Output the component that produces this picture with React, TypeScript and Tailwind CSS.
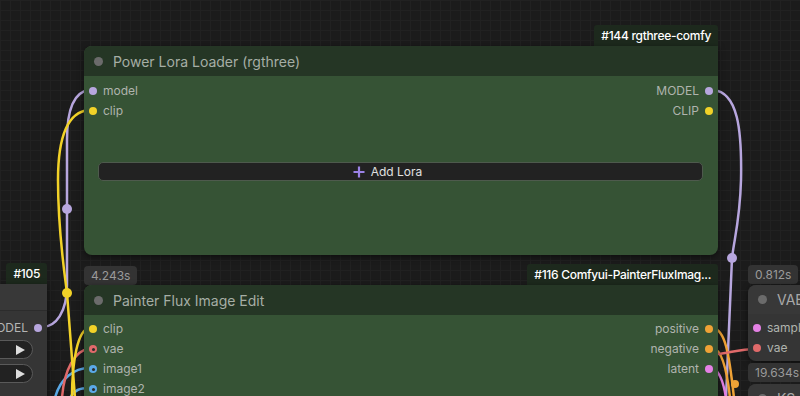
import React from "react";

type Slot = {
  label: string;
  dot: string;
  hollow?: boolean;
};

function Dot({ dot, hollow }: { dot: string; hollow?: boolean }) {
  return (
    <span className={`w-[8px] h-[8px] rounded-full flex items-center justify-center shrink-0 ${dot}`}>
      {hollow && <span className="w-[3px] h-[3px] rounded-full bg-[#2c2c2c]" />}
    </span>
  );
}

function SlotRows({ inputs, outputs }: { inputs: Slot[]; outputs: Slot[] }) {
  const rows = Math.max(inputs.length, outputs.length);
  return (
    <>
      {Array.from({ length: rows }, (_, i) => (
        <div key={i} className="h-[20px] px-[5px] flex items-center justify-between text-[12px] text-[#b0b4ae]">
          <div className="flex items-center gap-[6px]">
            {inputs[i] && (
              <>
                <Dot dot={inputs[i].dot} hollow={inputs[i].hollow} />
                <span>{inputs[i].label}</span>
              </>
            )}
          </div>
          <div className="flex items-center gap-[6px]">
            {outputs[i] && (
              <>
                <span>{outputs[i].label}</span>
                <Dot dot={outputs[i].dot} hollow={outputs[i].hollow} />
              </>
            )}
          </div>
        </div>
      ))}
    </>
  );
}

function Badge({ children }: { children: React.ReactNode }) {
  return (
    <div className="h-[21px] px-[7px] flex items-center bg-[#1d291d] text-white text-[12px] font-medium tracking-[-0.3px] rounded-t-[3px]">
      {children}
    </div>
  );
}

function Timing({ children }: { children: React.ReactNode }) {
  return (
    <div className="h-[19px] px-[7px] flex items-center bg-[#333333] text-[#9a9a9a] text-[12px] rounded-[4px]">
      {children}
    </div>
  );
}

function GreenTitle({ title }: { title: string }) {
  return (
    <div className="h-[30px] bg-[#253625] flex items-center pl-[10px] gap-[10px]">
      <span className="w-[9px] h-[9px] rounded-full bg-[#6b6b6b]" />
      <span className="text-[14px] text-[#a6aea5]">{title}</span>
    </div>
  );
}

function Wires() {
  return (
    <svg className="absolute inset-0" width={800} height={396} viewBox="0 0 800 396" fill="none" strokeLinecap="round">
      {/* bottom-left feeds into node 116 */}
      <path d="M55,398 C60,378 75,368 89,368" stroke="#5aa9e6" strokeWidth={2.5} />
      <path d="M70,398 C74,390 80,388 89,388" stroke="#5aa9e6" strokeWidth={2.5} />
      <path d="M62,398 C64,370 75,350 89,349" stroke="#e06a6a" strokeWidth={2.5} />
      <path d="M72,398 C72,360 78,330 89,328" stroke="#f2d228" strokeWidth={2.5} />
      {/* model from #105 */}
      <path d="M89,90 C74,92 67,110 67,140 L67,285 C67,312 56,327 42,327" stroke="#b7a6de" strokeWidth={2.5} />
      {/* clip */}
      <path d="M89,110 C66,112 58,140 58,180 C58,230 64,270 67,293 L75,398" stroke="#f2d228" strokeWidth={2.5} />
      {/* MODEL out */}
      <path d="M713,90 C738,92 742,130 741,180 C740,220 734,240 732,258 L726,398" stroke="#b7a6de" strokeWidth={2.5} />
      {/* bottom-right outputs */}
      <path d="M713,328 C725,330 729,352 734,398" stroke="#eea236" strokeWidth={2.5} />
      <path d="M713,348 C722,350 727,370 730,398" stroke="#eea236" strokeWidth={2.5} />
      <path d="M713,368 C720,372 724,385 726,398" stroke="#e481e4" strokeWidth={2.5} />
      <path d="M718,354 C732,352 742,349 756,349" stroke="#e06a6a" strokeWidth={2.5} />
      <circle cx={67} cy={209} r={5} fill="#b7a6de" />
      <circle cx={67} cy={293} r={5} fill="#f2d228" />
      <circle cx={732} cy={258} r={5} fill="#b7a6de" />
      <circle cx={735} cy={384} r={4} fill="#eea236" />
    </svg>
  );
}

export default function App() {
  return (
    <div className="relative w-[800px] h-[396px] overflow-hidden bg-[#1b1b1b] bg-[linear-gradient(#212121_1px,transparent_1px),linear-gradient(90deg,#212121_1px,transparent_1px)] bg-[size:10px_10px] font-['Inter',_'Noto_Sans',_sans-serif]">
      <Wires />

      {/* #144 Power Lora Loader */}
      <div className="absolute left-[84px] top-[25px] w-[634px] flex flex-col">
        <div className="flex justify-end">
          <Badge>#144 rgthree-comfy</Badge>
        </div>
        <div className="h-[209px] rounded-[8px] rounded-tr-none bg-[#365335] overflow-hidden shadow-[0_2px_6px_rgba(0,0,0,0.5)]">
          <GreenTitle title="Power Lora Loader (rgthree)" />
          <div className="pt-[5px]">
            <SlotRows
              inputs={[
                { label: "model", dot: "bg-[#b7a6de]" },
                { label: "clip", dot: "bg-[#f2d228]" },
              ]}
              outputs={[
                { label: "MODEL", dot: "bg-[#b7a6de]" },
                { label: "CLIP", dot: "bg-[#f2d228]" },
              ]}
            />
            <div className="mt-[41px] ml-[14px] mr-[15px] h-[19px] pr-[26px] rounded-[5px] bg-[#222222] border border-[#4e5a4d] flex items-center justify-center gap-[6px] text-[12px] text-[#e0e0e0]">
              <svg width="12" height="12" viewBox="0 0 12 12">
                <path d="M6 0.5v11M0.5 6h11" stroke="#9b82e6" strokeWidth="2.2" />
              </svg>
              <span>Add Lora</span>
            </div>
          </div>
        </div>
      </div>

      {/* #116 Painter Flux Image Edit */}
      <div className="absolute left-[84px] top-[264px] w-[634px] flex flex-col">
        <div className="flex justify-between items-end h-[21px]">
          <Timing>4.243s</Timing>
          <Badge>#116 Comfyui-PainterFluxImag...</Badge>
        </div>
        <div className="h-[140px] rounded-[8px] rounded-tr-none bg-[#365335] overflow-hidden shadow-[0_2px_6px_rgba(0,0,0,0.5)]">
          <GreenTitle title="Painter Flux Image Edit" />
          <div className="pt-[4px]">
            <SlotRows
              inputs={[
                { label: "clip", dot: "bg-[#f2d228]" },
                { label: "vae", dot: "bg-[#e06a6a]", hollow: true },
                { label: "image1", dot: "bg-[#5aa9e6]", hollow: true },
                { label: "image2", dot: "bg-[#5aa9e6]", hollow: true },
              ]}
              outputs={[
                { label: "positive", dot: "bg-[#eea236]" },
                { label: "negative", dot: "bg-[#eea236]" },
                { label: "latent", dot: "bg-[#e481e4]" },
              ]}
            />
          </div>
        </div>
      </div>

      {/* #105 left node */}
      <div className="absolute left-[-153px] top-[263px] w-[200px] flex flex-col">
        <div className="flex justify-end">
          <Badge>#105</Badge>
        </div>
        <div className="h-[140px] rounded-[8px] rounded-tr-none bg-[#353535] overflow-hidden shadow-[0_2px_6px_rgba(0,0,0,0.5)]">
          <div className="h-[27px] bg-[#383838] border-b border-[#2c2c2c]" />
          <div className="h-[20px] mt-[7px] px-[5px] flex items-center justify-end gap-[6px] text-[12px] text-[#b4b4b4]">
            <span>MODEL</span>
            <Dot dot="bg-[#b7a6de]" />
          </div>
          <div className="flex flex-col gap-[5px] mt-[2px] mr-[14px]">
            {[0, 1].map((i) => (
              <div key={i} className="h-[19px] rounded-full bg-[#222222] border border-[#5a5a5a] flex items-center justify-end pr-[7px]">
                <svg width="9" height="10" viewBox="0 0 9 10">
                  <path d="M0 0L9 5L0 10Z" fill="#dddddd" />
                </svg>
              </div>
            ))}
          </div>
        </div>
      </div>

      {/* right column: VAE Decode, KSampler */}
      <div className="absolute left-[748px] top-[265px] w-[160px] flex flex-col">
        <div className="flex">
          <Timing>0.812s</Timing>
        </div>
        <div className="mt-[1px] h-[76px] rounded-[8px] bg-[#353535] overflow-hidden shadow-[0_2px_6px_rgba(0,0,0,0.5)]">
          <div className="h-[29px] bg-[#383838] flex items-center pl-[10px] gap-[10px]">
            <span className="w-[9px] h-[9px] rounded-full bg-[#6b6b6b]" />
            <span className="text-[14px] text-[#a8a8a8]">VAE Decode</span>
          </div>
          <div className="pt-[4px]">
            <SlotRows
              inputs={[
                { label: "samples", dot: "bg-[#e481e4]" },
                { label: "vae", dot: "bg-[#e06a6a]" },
              ]}
              outputs={[]}
            />
          </div>
        </div>
        <div className="mt-[2px] flex">
          <Timing>19.634s</Timing>
        </div>
        <div className="mt-[2px] h-[60px] rounded-[8px] bg-[#353535] overflow-hidden">
          <div className="h-[29px] bg-[#383838] flex items-center pl-[10px] gap-[10px]">
            <span className="w-[9px] h-[9px] rounded-full bg-[#6b6b6b]" />
            <span className="text-[14px] text-[#a8a8a8]">KSampler</span>
          </div>
        </div>
      </div>
    </div>
  );
}
